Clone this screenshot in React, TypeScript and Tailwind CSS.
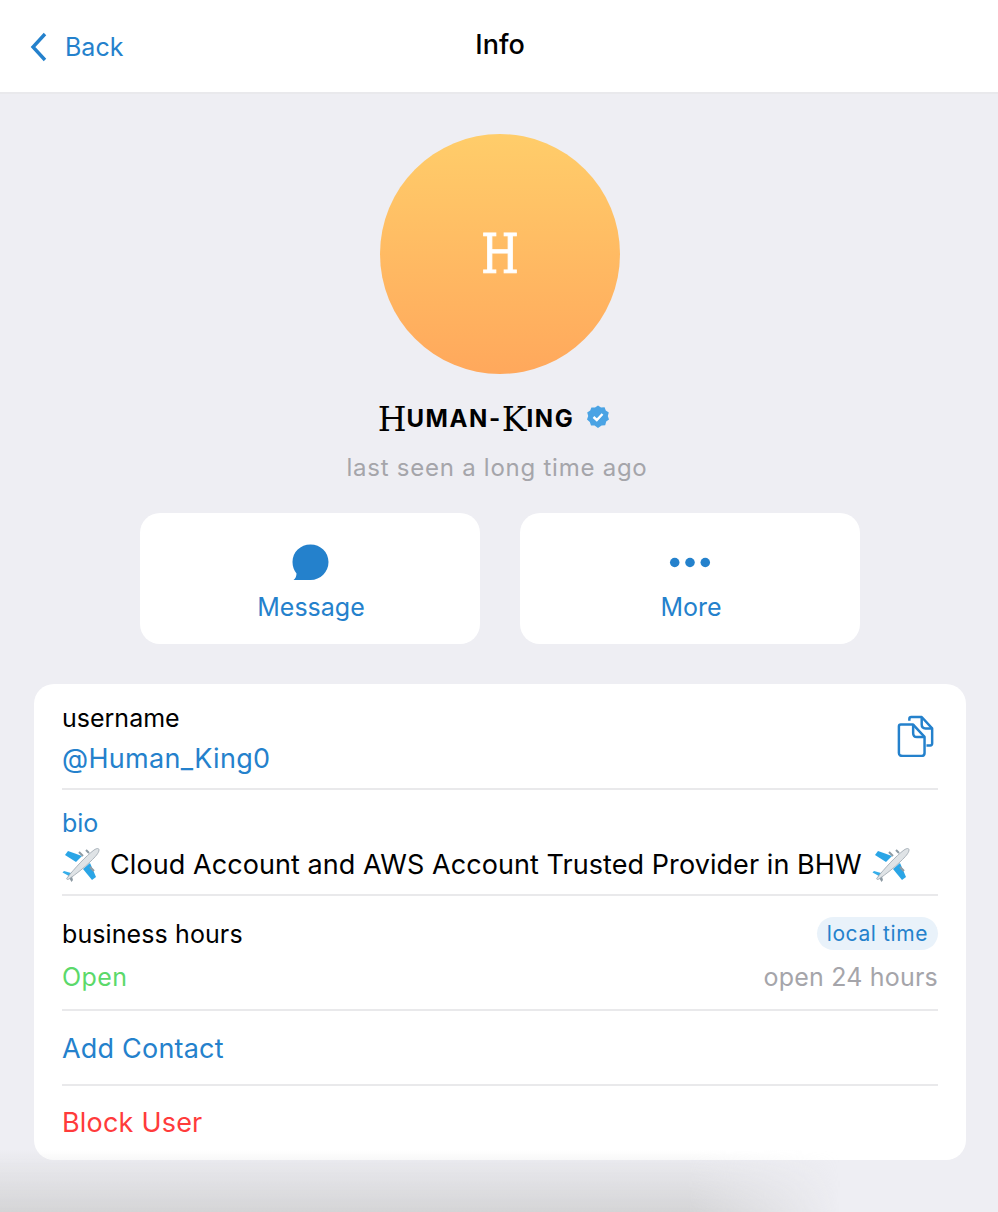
import { useState } from 'react'

const font = { fontFamily: 'Inter, "Liberation Sans", sans-serif' }

function Plane() {
  return (
    <svg width="38" height="36" viewBox="0 0 38 36" className="shrink-0">
      <path d="M14 15 L3 8 L6 4 L20 9 Z" fill="#2aa5e6" />
      <path d="M21 22 L30 33 L34 30 L28 16 Z" fill="#2aa5e6" />
      <path d="M9 26 L2 24 L0.5 25.5 L7 29 Z" fill="#35aeea" />
      <path d="M9 26 L11 33 L9.5 35 L6 29 Z" fill="#8d9aa3" />
      <path d="M5 31 C12 22 24 9 32 3 C35 1 37 1 37 3 C37 6 33 10 29 14 C22 21 14 27 7 32 C5 33 4 32 5 31 Z" fill="#dfe3e6" stroke="#9aa5ad" strokeWidth="0.8" />
      <path d="M17 5 L21 9 M28 20 L32 24 M24 3 L27 6" stroke="#8d9aa3" strokeWidth="2" />
    </svg>
  )
}

function Divider() {
  return <div className="h-[2px] bg-[#e9e9eb]" />
}

export default function App() {
  const [name] = useState('Human-King')

  return (
    <div style={font} className="relative h-[1212px] w-[998px] overflow-hidden bg-[#eeeef3] text-[25px] text-black">
      <header className="relative flex h-[94px] items-center justify-center border-b-2 border-[#e9e9ec] bg-white pl-[2px]">
        <div className="absolute left-[30px] top-[32px] flex items-center gap-[18px] text-[#2481cc]">
          <svg width="17" height="30" viewBox="0 0 17 30" fill="none" stroke="currentColor" strokeWidth="3.4">
            <path d="M15 2 L3 15 L15 28" />
          </svg>
          <span className="text-[25px] leading-[30px]">Back</span>
        </div>
        <h1 className="-mt-[2px] text-[27px] font-medium">Info</h1>
      </header>

      <main className="flex flex-col items-center pl-[2px] pt-[40px]">
        <div className="flex h-[240px] w-[240px] items-center justify-center rounded-full bg-gradient-to-b from-[#ffcd6a] to-[#ffa85c]">
          <span className="inline-block scale-y-[1.27] text-[43px] leading-none text-white [-webkit-text-stroke:0.8px_white]" style={{ fontFamily: '"DejaVu Serif", serif' }}>H</span>
        </div>

        <div className="mr-[12px] mt-[29px] flex h-[32px] items-center" aria-label={name}>
          <span className="text-[33px] leading-none" style={{ fontFamily: '"DejaVu Serif", serif' }}>H</span>
          <span className="text-[24px] font-bold leading-none tracking-[1.6px]">UMAN-</span>
          <span className="text-[33px] leading-none" style={{ fontFamily: '"DejaVu Serif", serif' }}>K</span>
          <span className="text-[24px] font-bold leading-none tracking-[1.6px]">ING</span>
          <svg width="24" height="24" viewBox="0 0 24 24" className="-mt-[4px] ml-[12px]">
            <path d="M12 0.5 L15 2.5 L18.6 2.2 L19.8 5.4 L22.8 7.4 L21.8 11 L23 14.4 L20.2 16.6 L19.2 20.2 L15.6 20.4 L12 23 L8.6 20.6 L5 20.4 L3.8 17 L1 14.6 L2.2 11 L1.2 7.6 L4.2 5.6 L5.4 2.4 L9 2.6 Z" fill="#4aa3e4" />
            <path d="M7.5 12 L10.8 15 L16.5 9" fill="none" stroke="white" strokeWidth="2.4" />
          </svg>
        </div>
        <p className="mr-[6px] mt-[18px] text-[24px] leading-[30px] tracking-[0.75px] text-[#a5a5aa]">last seen a long time ago</p>

        <div className="mt-[30px] flex gap-[40px]">
          <button className="flex h-[131px] w-[340px] flex-col items-center rounded-[20px] bg-white pt-[31px] text-[#2481cc]">
            <svg width="37" height="37" viewBox="0 0 37 37" className="ml-[1px]">
              <path d="M18.5 0.5 C28.5 0.5 36.5 8 36.5 18 C36.5 28 28.5 36 18.5 36 H1.5 C3.5 34.5 4.5 32 4.5 29.5 C2 26.5 0.5 22.5 0.5 18 C0.5 8 8.5 0.5 18.5 0.5 Z" fill="currentColor" />
            </svg>
            <span className="ml-[2px] mt-[11px] text-[25px] leading-[30px]">Message</span>
          </button>
          <button className="flex h-[131px] w-[340px] flex-col items-center rounded-[20px] bg-white pt-[31px] text-[#2481cc]">
            <svg width="42" height="37" viewBox="0 0 44 37" fill="currentColor">
              <circle cx="6" cy="18.5" r="5" />
              <circle cx="22" cy="18.5" r="5" />
              <circle cx="38" cy="18.5" r="5" />
            </svg>
            <span className="ml-[2px] mt-[11px] text-[25px] leading-[30px]">More</span>
          </button>
        </div>

        <section className="mt-[40px] flex h-[476px] w-[932px] flex-col rounded-[20px] bg-white px-[28px]">
          <div className="flex h-[104px] items-center justify-between">
            <div className="pt-[4px]">
              <div className="text-[25px] leading-[30px]">username</div>
              <div className="mt-[11px] text-[27px] leading-[30px] tracking-[0.3px] text-[#2481cc]">@Human_King0</div>
            </div>
            <svg width="38" height="42" viewBox="0 0 40 44" fill="none" stroke="#2481cc" strokeWidth="2.6" strokeLinejoin="round" className="mr-[3px] mt-[-1px]">
              <path d="M13 6 V4 Q13 2 15 2 H26 L37 14 V30 Q37 32 35 32 H31" />
              <path d="M26 2 V10 Q26 14 30 14 H37" />
              <path d="M4 10 H17 L29 23 V40 Q29 43 26 43 H6 Q2 43 2 40 V12 Q2 10 4 10 Z" />
              <path d="M17 10 V19 Q17 23 21 23 H29" />
            </svg>
          </div>
          <Divider />
          <div className="flex h-[104px] flex-col justify-center pt-[6px]">
            <div className="text-[25px] leading-[30px] text-[#2481cc]">bio</div>
            <div className="mt-[9px] flex h-[36px] items-center gap-[10px] text-[27px] leading-[30px] tracking-[0.07px]">
              <Plane />
              <span>Cloud Account and AWS Account Trusted Provider in BHW</span>
              <Plane />
            </div>
          </div>
          <Divider />
          <div className="flex h-[113px] flex-col justify-center pt-[3px]">
            <div className="flex h-[34px] items-center justify-between">
              <span className="text-[25px] leading-[30px] tracking-[0.1px]">business hours</span>
              <span className="rounded-full bg-[#e9f2fa] px-[10px] text-[21px] leading-[33px] tracking-[0.6px] text-[#2481cc]">local time</span>
            </div>
            <div className="mt-[11px] flex items-center justify-between text-[25px] leading-[30px]">
              <span className="tracking-[0.4px] text-[#5bd96a]">Open</span>
              <span className="tracking-[0.2px] text-[#a5a5aa]">open 24 hours</span>
            </div>
          </div>
          <Divider />
          <div className="flex h-[73px] items-center pt-[4px] text-[27px] tracking-[0.2px] text-[#2481cc]">Add Contact</div>
          <Divider />
          <div className="flex h-[71px] items-center pt-[4px] text-[27px] tracking-[0.2px] text-[#ff3b3b]">Block User</div>
        </section>
      </main>

      {/* shadow sitting over the bottom edge */}
      <div className="pointer-events-none absolute bottom-0 left-0 h-[62px] w-[840px] bg-gradient-to-b from-transparent to-[#d4d4d6] [mask-image:linear-gradient(to_right,black_82%,transparent)]" />
    </div>
  )
}
